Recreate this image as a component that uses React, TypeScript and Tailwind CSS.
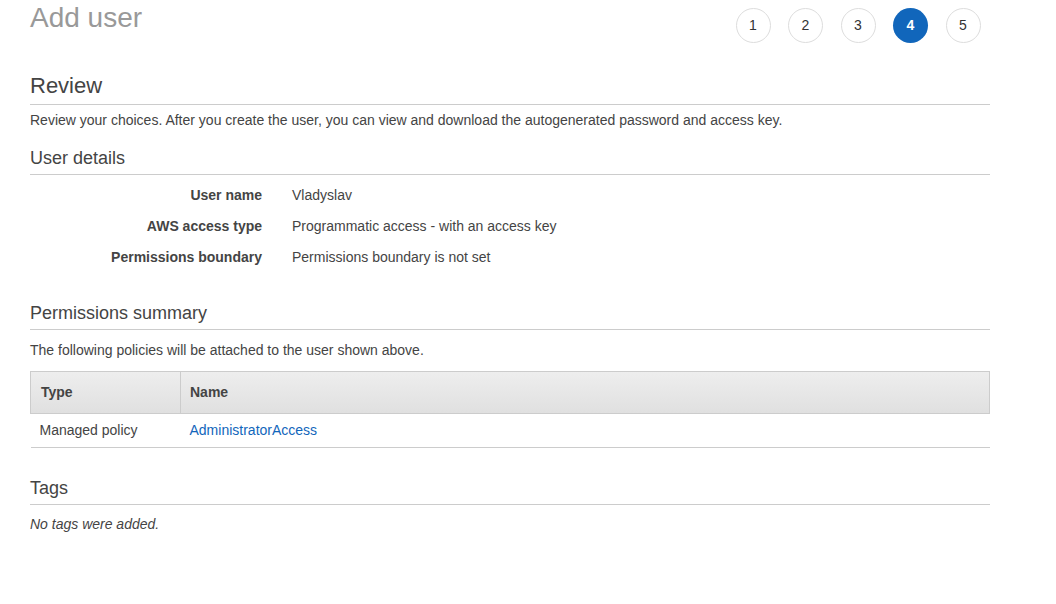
import React from 'react';

const steps = [1, 2, 3, 4, 5];
const current = 4;

const details = [
  { label: 'User name', value: 'Vladyslav' },
  { label: 'AWS access type', value: 'Programmatic access - with an access key' },
  { label: 'Permissions boundary', value: 'Permissions boundary is not set' },
];

function SectionTitle({ children, big }: { children: React.ReactNode; big?: boolean }) {
  return (
    <h2
      className={
        big
          ? 'text-[22px] leading-[26px] text-[#444] pb-[5px] border-b border-[#cccccc]'
          : 'text-[18px] leading-[22px] text-[#444] pb-[5px] border-b border-[#cccccc]'
      }
    >
      {children}
    </h2>
  );
}

export default function App() {
  return (
    <div
      className="w-[1056px] h-[604px] bg-white overflow-hidden"
      style={{ fontFamily: '"Liberation Sans", Arial, sans-serif' }}
    >
      <div className="ml-[30px] w-[960px] text-[14px] text-[#444]">
        {/* header */}
        <div className="flex justify-between items-start">
          <h1 className="text-[28px] leading-[36px] text-[#999]">Add user</h1>
          <div className="flex gap-[17.5px] mt-[7.5px] mr-[9.5px]">
            {steps.map(s => (
              <div
                key={s}
                className={
                  s === current
                    ? 'w-[35px] h-[35px] rounded-full bg-[#1166bb] text-white font-bold flex items-center justify-center text-[14px]'
                    : 'w-[35px] h-[35px] rounded-full border border-[#dddddd] text-[#333] flex items-center justify-center text-[14px]'
                }
              >
                {s}
              </div>
            ))}
          </div>
        </div>

        {/* review */}
        <div className="mt-[30px]">
          <SectionTitle big>Review</SectionTitle>
          <p className="mt-[5px] leading-[20px]">
            Review your choices. After you create the user, you can view and download the autogenerated password and access key.
          </p>
        </div>

        {/* user details */}
        <div className="mt-[17px]">
          <SectionTitle>User details</SectionTitle>
          <div className="mt-[5.5px]">
            {details.map(d => (
              <div key={d.label} className="flex h-[31px] items-center">
                <div className="w-[232px] text-right font-bold text-[#444]">{d.label}</div>
                <div className="ml-[30px]">{d.value}</div>
              </div>
            ))}
          </div>
        </div>

        {/* permissions */}
        <div className="mt-[28.5px]">
          <SectionTitle>Permissions summary</SectionTitle>
          <p className="mt-[10px] leading-[20px]">The following policies will be attached to the user shown above.</p>
          <table className="mt-[11px] w-full border-collapse">
            <thead>
              <tr className="h-[42px] bg-gradient-to-b from-[#eeeeee] to-[#e0e0e0]">
                <th className="w-[150px] border border-[#cccccc] text-left font-bold pl-[10px]">Type</th>
                <th className="border border-[#cccccc] text-left font-bold pl-[9px]">Name</th>
              </tr>
            </thead>
            <tbody>
              <tr className="h-[34px] border-b border-[#cccccc]">
                <td className="pl-[9px]">Managed policy</td>
                <td className="pl-[9px]">
                  <a className="text-[#1166bb]" href="#">AdministratorAccess</a>
                </td>
              </tr>
            </tbody>
          </table>
        </div>

        {/* tags */}
        <div className="mt-[29px]">
          <SectionTitle>Tags</SectionTitle>
          <p className="mt-[9px] leading-[20px] italic">No tags were added.</p>
        </div>
      </div>
    </div>
  );
}
